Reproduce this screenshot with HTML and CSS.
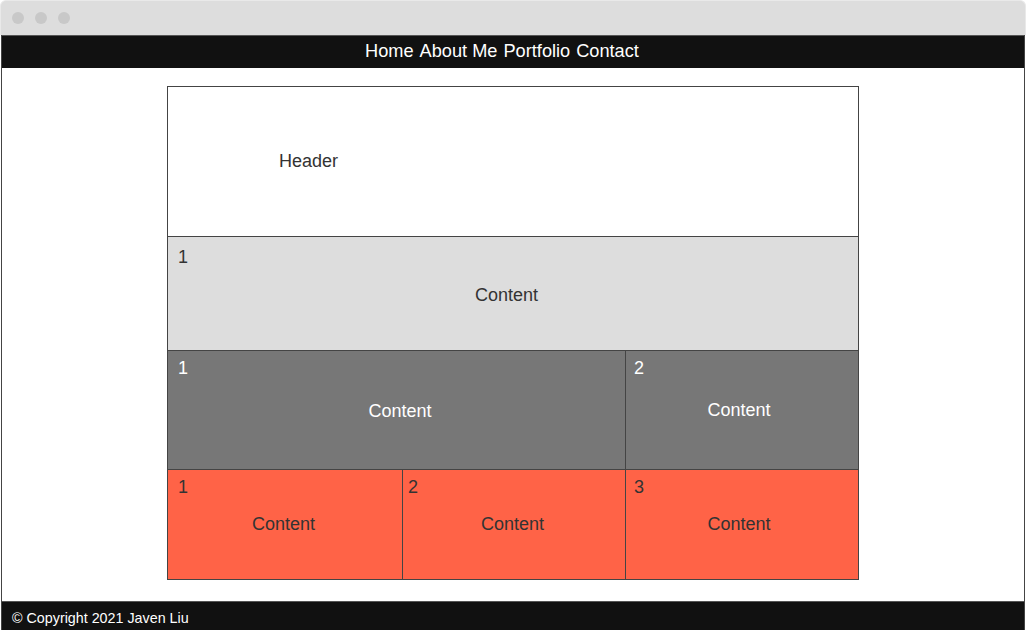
FILE: index.html
```html
<!DOCTYPE html>
<html lang="en">
<head>
<meta charset="utf-8">
<title>Grid Layout</title>
<link rel="stylesheet" href="styles.css">
</head>
<body>
<div class="window">
  <div class="titlebar">
    <span class="dot"></span><span class="dot"></span><span class="dot"></span>
  </div>
  <div class="frame">
    <nav class="nav">
      <a href="#">Home</a>
      <a href="#">About Me</a>
      <a href="#">Portfolio</a>
      <a href="#">Contact</a>
    </nav>
    <main class="main">
      <div class="grid">
        <div class="cell header"><span class="label">Header</span></div>
        <div class="cell light full">
          <span class="num num-first">1</span>
          <span class="content shift-row2">Content</span>
        </div>
        <div class="cell dark wide">
          <span class="num">1</span>
          <span class="content shift-wide">Content</span>
        </div>
        <div class="cell dark">
          <span class="num num-side">2</span>
          <span class="content shift-side">Content</span>
        </div>
        <div class="cell red">
          <span class="num">1</span>
          <span class="content shift-red">Content</span>
        </div>
        <div class="cell red">
          <span class="num num-tight">2</span>
          <span class="content shift-red">Content</span>
        </div>
        <div class="cell red">
          <span class="num num-side">3</span>
          <span class="content shift-side">Content</span>
        </div>
      </div>
    </main>
    <footer class="footer">© Copyright 2021 Javen Liu</footer>
  </div>
</div>
</body>
</html>
```

FILE: styles.css
```css
* { box-sizing: border-box; }

html, body {
  margin: 0;
  padding: 0;
  background: #ffffff;
  font-family: "Liberation Sans", Arial, sans-serif;
}

.window {
  height: 630px;
  overflow: hidden;
  display: flex;
  flex-direction: column;
}

.titlebar {
  height: 35px;
  flex: 0 0 35px;
  background: #dddddd;
  border: 1px solid #e9e9e9;
  border-bottom: none;
  border-radius: 6px 6px 0 0;
  display: flex;
  align-items: center;
  padding-left: 11px;
  gap: 11px;
}

.dot {
  width: 12px;
  height: 12px;
  border-radius: 50%;
  background: #c8c8c8;
}

.frame {
  flex: 1;
  margin: 0 1px;
  border-left: 1px solid #444;
  border-right: 1px solid #444;
  display: flex;
  flex-direction: column;
}

.nav {
  height: 33px;
  flex: 0 0 33px;
  background: #111111;
  border-top: 1px solid #555;
  display: flex;
  justify-content: center;
  align-items: center;
  gap: 6px;
  padding-right: 22px;
  padding-bottom: 2px;
}

.nav a {
  color: #ffffff;
  text-decoration: none;
  font-size: 18.2px;
  line-height: 20px;
}

.main {
  padding: 18px 0 21px;
  display: flex;
  justify-content: center;
}

.grid {
  width: 692px;
  display: grid;
  grid-template-columns: 234px 222px 232px;
  grid-template-rows: 149px 113px 118px 109px;
  gap: 1px;
  padding: 1px;
  background: #444444;
}

.cell {
  display: grid;
  font-size: 18px;
  line-height: 21px;
}

.cell > * { grid-area: 1 / 1; }

.header {
  grid-column: 1 / 4;
  background: #ffffff;
  color: #333;
  align-items: center;
  padding-left: 111px;
}

.full { grid-column: 1 / 4; }
.wide { grid-column: 1 / 3; }

.light { background: #dddddd; color: #333; }
.dark { background: #777777; color: #ffffff; }
.red { background: #ff6347; color: #333; }

.num {
  align-self: start;
  justify-self: start;
  margin: 7px 0 0 10px;
}

.num-first { margin-top: 10px; }
.num-tight { margin-left: 5px; }
.num-side { margin-left: 8px; }

.content {
  align-self: center;
  justify-self: center;
}

.shift-row2 { margin: 3px 13px 0 0; }
.shift-wide { margin: 2px 0 0 7px; }
.shift-side { margin-right: 6px; }
.shift-red { margin-right: 3px; }

.footer {
  background: #111111;
  border-top: 1px solid #555;
  color: #ffffff;
  font-size: 14.3px;
  line-height: 16px;
  padding: 8px 10px;
  flex: 1;
}
```
